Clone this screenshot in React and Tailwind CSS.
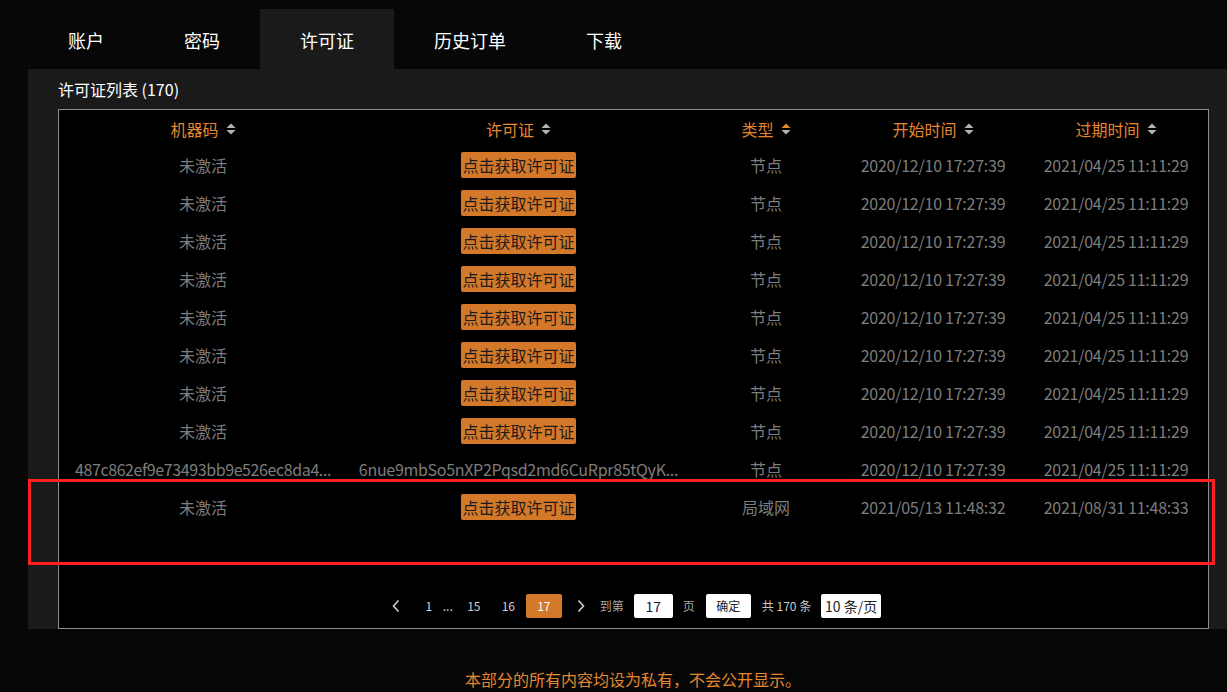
import React from "react";

const FONT = "font-['Noto_Sans_CJK_SC','Noto_Sans',sans-serif]";

function SortIcon({ active }) {
  return (
    <svg width="10" height="12" viewBox="0 0 10 12" className="ml-[7px] shrink-0">
      <polygon points="0.5,5 5,0.5 9.5,5" fill={active ? "#e5872e" : "#b4b4b4"} />
      <polygon points="0.5,7 9.5,7 5,11.5" fill="#b4b4b4" />
    </svg>
  );
}

function Chevron({ dir }) {
  return (
    <svg width="10" height="14" viewBox="0 0 10 14">
      {dir === "left" ? (
        <polyline points="7.5,1.5 2.5,7 7.5,12.5" fill="none" stroke="#d0d0d0" strokeWidth="1.6" />
      ) : (
        <polyline points="2.5,1.5 7.5,7 2.5,12.5" fill="none" stroke="#d0d0d0" strokeWidth="1.6" />
      )}
    </svg>
  );
}

const tabs = ["账户", "密码", "许可证", "历史订单", "下载"];

const normal = {
  m: "未激活",
  btn: true,
  t: "节点",
  s: "2020/12/10 17:27:39",
  e: "2021/04/25 11:11:29",
};

const rows = [
  ...Array.from({ length: 8 }, () => normal),
  {
    m: "487c862ef9e73493bb9e526ec8da4...",
    l: "6nue9mbSo5nXP2Pqsd2md6CuRpr85tQyK...",
    t: "节点",
    s: "2020/12/10 17:27:39",
    e: "2021/04/25 11:11:29",
  },
  {
    m: "未激活",
    btn: true,
    t: "局域网",
    s: "2021/05/13 11:48:32",
    e: "2021/08/31 11:48:33",
  },
];

const cols = "grid grid-cols-[288px_343px_152px_182px_1fr]";

export default function App() {
  return (
    <div className={`relative min-h-screen w-[1227px] h-[692px] overflow-hidden bg-[#070707] ${FONT}`}>
      {/* Tabs */}
      <div className="flex pt-[9px] pl-[28px]">
        {tabs.map((t) => (
          <div
            key={t}
            className={`h-[60px] px-10 pt-[3px] flex items-center text-[18px] text-white ${
              t === "许可证" ? "bg-[#1a1a1a]" : ""
            }`}
          >
            {t}
          </div>
        ))}
      </div>

      {/* Panel */}
      <div className="ml-[28px] bg-[#1a1a1a] pl-[30px] pr-[18px]">
        <div className="h-[40px] flex items-center text-[16px] text-white">许可证列表 (170)</div>
        <div className="border border-[#8c8c8c] bg-black h-[520px] flex flex-col">
          {/* Header */}
          <div className={`${cols} h-[36px] text-[16px] text-[#e5872e]`}>
            {[
              ["机器码", false],
              ["许可证", false],
              ["类型", true],
              ["开始时间", false],
              ["过期时间", false],
            ].map(([h, a]) => (
              <div key={h} className="flex items-center justify-center pt-[2px]">
                <span>{h}</span>
                <SortIcon active={a} />
              </div>
            ))}
          </div>
          {rows.map((r, i) => (
            <div key={i} className={`${cols} h-[38px] text-[16px] text-[#7d7d7d]`}>
              <div className={`flex items-center justify-center whitespace-nowrap ${r.btn ? "" : "tracking-[-0.4px]"}`}>
                {r.m}
              </div>
              <div className="flex items-center justify-center whitespace-nowrap tracking-[-0.3px]">
                {r.btn ? (
                  <span className="bg-[#d4782a] text-[#1c1c1c] rounded-[2px] h-[26px] px-[1px] flex items-center tracking-normal">
                    点击获取许可证
                  </span>
                ) : (
                  r.l
                )}
              </div>
              <div className="flex items-center justify-center">{r.t}</div>
              <div className="flex items-center justify-center whitespace-nowrap tracking-[-0.25px]">{r.s}</div>
              <div className="flex items-center justify-center whitespace-nowrap tracking-[-0.25px]">{r.e}</div>
            </div>
          ))}

          {/* Pagination */}
          <div className="mt-[68px] flex justify-center items-center h-6 text-[12px]">
            <div className="w-[20px] flex justify-center">
              <Chevron dir="left" />
            </div>
            <div className="w-[13px]" />
            <div className="w-[20px] text-center text-[#d0d0d0]">1</div>
            <div className="w-[18px] text-center text-[#d0d0d0]">...</div>
            <div className="w-[34px] text-center text-[#d0d0d0]">15</div>
            <div className="w-[35px] text-center text-[#d0d0d0]">16</div>
            <div className="w-[36px] h-6 rounded-[2px] bg-[#d4782a] text-white flex items-center justify-center">17</div>
            <div className="w-[38px] flex justify-center">
              <Chevron dir="right" />
            </div>
            <div className="text-[#a8a8a8]">到第</div>
            <div className="ml-[10px] w-[39px] h-6 bg-white rounded-[2px] flex items-center justify-center text-[14px] text-[#1a1a3a]">
              17
            </div>
            <div className="ml-[10px] text-[#a8a8a8]">页</div>
            <div className="ml-[11px] w-[45px] h-6 bg-white rounded-[2px] flex items-center justify-center text-[12px] text-[#222]">
              确定
            </div>
            <div className="ml-[11px] text-[#c8c8c8] whitespace-nowrap">共 170 条</div>
            <div className="ml-[10px] w-[60px] h-6 bg-white rounded-[2px] flex items-center justify-center text-[14px] text-[#222] whitespace-nowrap">
              10 条/页
            </div>
          </div>
        </div>
      </div>

      {/* Footer note */}
      <div className="pl-[39px] mt-[38px] text-center text-[16px] leading-6 text-[#e5872e]">
        本部分的所有内容均设为私有，不会公开显示。
      </div>

      {/* Red annotation box */}
      <div className="absolute left-[28px] top-[479px] w-[1187px] h-[86px] border-[3px] border-[#ff2020] pointer-events-none" />
    </div>
  );
}
